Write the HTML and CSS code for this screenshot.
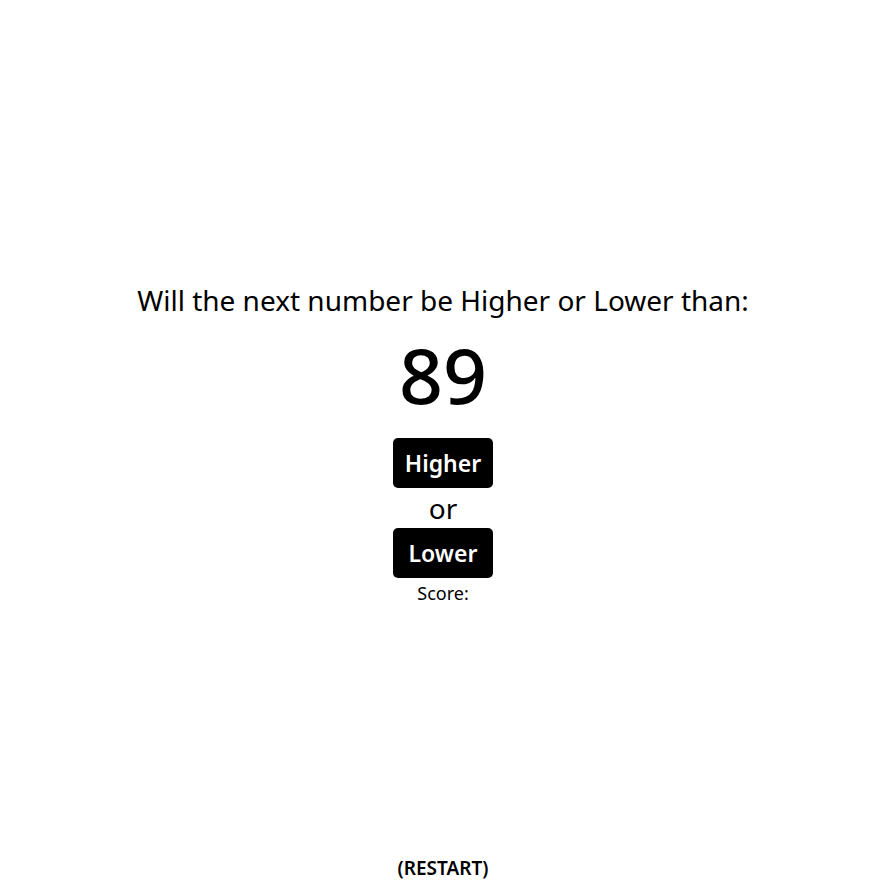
FILE: index.html
```html
<!DOCTYPE html>
<html lang="en">
<head>
<meta charset="utf-8">
<title>Higher or Lower</title>
<link rel="stylesheet" href="styles.css">
</head>
<body>
<div class="app">
  <main class="game">
    <h2 class="question">Will the next number be Higher or Lower than:</h2>
    <div class="number">89</div>
    <button class="choice">Higher</button>
    <div class="or">or</div>
    <button class="choice">Lower</button>
    <div class="score">Score:</div>
  </main>
  <footer class="footer">
    <span class="restart">(RESTART)</span>
  </footer>
</div>
</body>
</html>
```
FILE: styles.css
```css
html, body {
  margin: 0;
  padding: 0;
  background: #fff;
  color: #000;
  font-family: "Noto Sans", "Open Sans", sans-serif;
}
.app {
  height: 887px;
  display: flex;
  flex-direction: column;
  align-items: center;
}
.game {
  display: flex;
  flex-direction: column;
  align-items: center;
  padding-top: 280px;
}
.question {
  margin: 0;
  font-size: 28px;
  font-weight: 400;
  line-height: 40px;
}
.number {
  font-size: 77px;
  font-weight: 500;
  line-height: 110px;
  margin-bottom: 8px;
}
.choice {
  width: 100px;
  height: 50px;
  background: #000;
  color: #fff;
  border: none;
  border-radius: 5px;
  font-family: inherit;
  font-size: 23px;
  font-weight: 600;
  padding: 0;
  cursor: pointer;
}
.or {
  font-size: 28px;
  line-height: 40px;
}
.score {
  font-size: 18px;
  line-height: 30px;
}
.footer {
  margin-top: auto;
  padding-bottom: 6px;
}
.restart {
  font-size: 19px;
  font-weight: 600;
}
```
